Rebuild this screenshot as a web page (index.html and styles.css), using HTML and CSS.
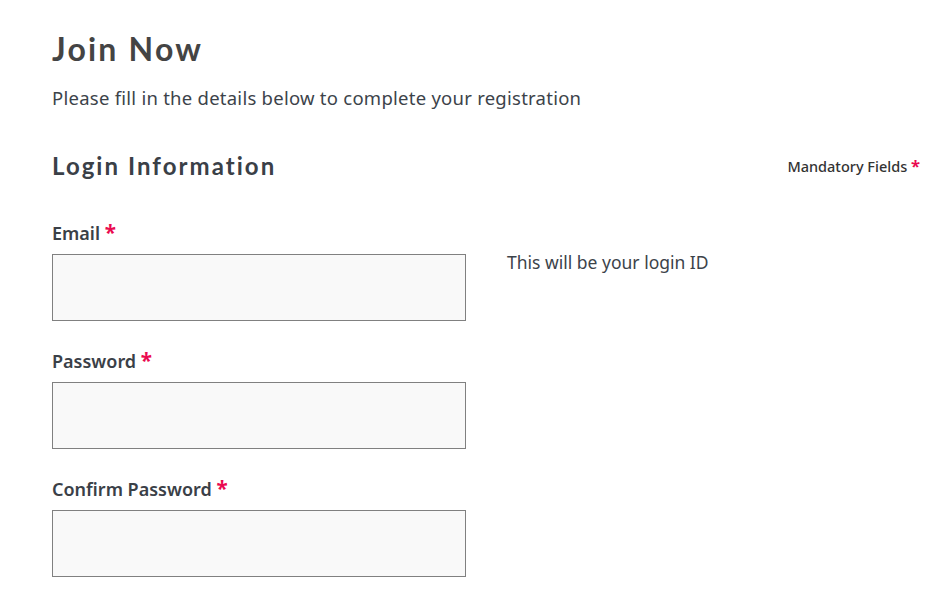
FILE: index.html
```html
<!DOCTYPE html>
<html>
<head>
<meta charset="utf-8">
<link rel="stylesheet" href="styles.css">
</head>
<body>
<main class="page">
  <h1 class="title">Join Now</h1>
  <p class="intro">Please fill in the details below to complete your registration</p>
  <div class="section-head">
    <h2 class="section-title">Login Information</h2>
    <span class="mandatory">Mandatory Fields <span class="star">*</span></span>
  </div>
  <div class="field">
    <label class="label">Email <span class="star">*</span></label>
    <div class="row">
      <input class="input" type="text">
      <span class="hint">This will be your login ID</span>
    </div>
  </div>
  <div class="field">
    <label class="label">Password <span class="star">*</span></label>
    <div class="row">
      <input class="input" type="password">
    </div>
  </div>
  <div class="field">
    <label class="label">Confirm Password <span class="star">*</span></label>
    <div class="row">
      <input class="input" type="password">
    </div>
  </div>
</main>
</body>
</html>
```

FILE: styles.css
```css
html, body {
  margin: 0;
  padding: 0;
  background: #ffffff;
}
body {
  font-family: "Noto Sans", "Open Sans", sans-serif;
  color: #3c434a;
}
.page {
  padding: 29px 24px 0 52px;
}
.title {
  margin: 0;
  font-family: "Lato", "Noto Sans", sans-serif;
  font-weight: 700;
  font-size: 32px;
  line-height: 40px;
  color: #444444;
  letter-spacing: 2.2px;
}
.intro {
  margin: 17px 0 0 0;
  font-size: 18.5px;
  line-height: 24px;
  letter-spacing: 0.25px;
  color: #3c434a;
}
.section-head {
  display: flex;
  justify-content: space-between;
  align-items: center;
  margin-top: 41px;
}
.section-title {
  margin: 0;
  font-family: "Lato", "Noto Sans", sans-serif;
  font-weight: 700;
  font-size: 24px;
  line-height: 30px;
  color: #3a4047;
  letter-spacing: 2.05px;
}
.mandatory {
  font-family: "Noto Sans", sans-serif;
  font-weight: 500;
  font-size: 14.5px;
  color: #333333;
  margin-top: -2px;
}
.star {
  color: #ea0a50;
  font-weight: 700;
  font-size: 1.15em;
}
.field {
  margin-top: 39px;
}
.field + .field {
  margin-top: 27px;
}
.label {
  display: block;
  font-family: "Noto Sans", sans-serif;
  font-weight: 600;
  font-size: 18px;
  line-height: 24px;
  color: #3a4047;
}
.row {
  display: flex;
  align-items: flex-start;
  gap: 41px;
  margin-top: 9px;
}
.input {
  box-sizing: border-box;
  width: 414px;
  height: 67px;
  margin: 0;
  border: 1px solid #808080;
  background: #f9f9f9;
  border-radius: 0;
}
.hint {
  font-size: 17.5px;
  line-height: 22px;
  color: #3c434a;
  margin-top: -3px;
}
```
